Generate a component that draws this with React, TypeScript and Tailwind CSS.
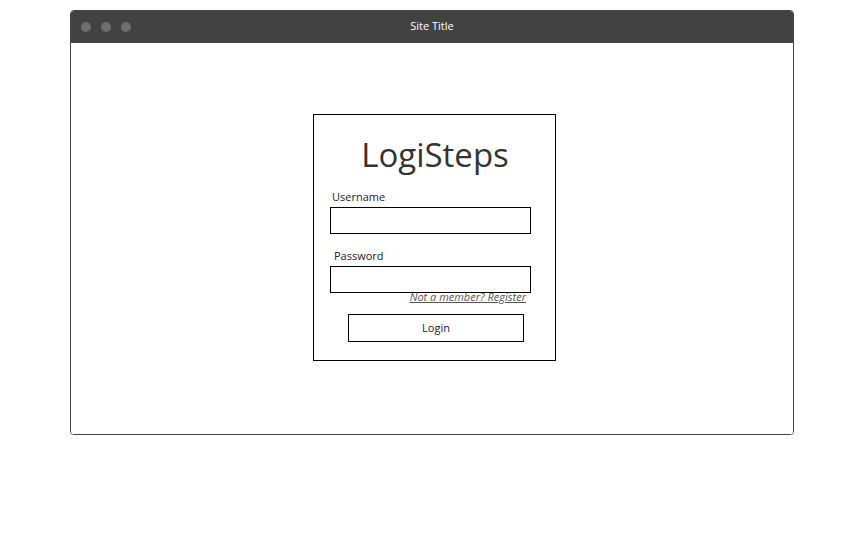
export default function App() {
  return (
    <div className="w-[843px] h-[545px] bg-white pt-[10px] pl-[70px]" style={{ fontFamily: '"Open Sans", "Noto Sans", sans-serif' }}>
      <div className="w-[724px] h-[425px] border border-[#444] rounded-[4px] overflow-hidden flex flex-col">
        <div className="h-[32px] bg-[#424242] flex items-center relative shrink-0">
          <div className="flex gap-[10px] pl-[10px] -mt-[1px]">
            <span className="w-[10px] h-[10px] rounded-full bg-[#6e6e6e]" />
            <span className="w-[10px] h-[10px] rounded-full bg-[#6e6e6e]" />
            <span className="w-[10px] h-[10px] rounded-full bg-[#6e6e6e]" />
          </div>
          <div className="absolute inset-0 flex items-center justify-center text-[11px] text-white pb-[1px]">Site Title</div>
        </div>
        <div className="flex-1 bg-white pt-[71px] pl-[242px]">
          <div className="w-[243px] h-[247px] border border-black flex flex-col">
            <div className="text-[33px] leading-none text-[#333] text-center pt-[23px] pl-[1px]">LogiSteps</div>
            <div className="text-[11px] text-[#222] pl-[18px] pt-[20px] leading-none">Username</div>
            <div className="ml-[16px] mt-[5px] w-[201px] h-[27px] border border-black" />
            <div className="text-[11px] text-[#222] pl-[20px] pt-[16px] leading-none">Password</div>
            <div className="ml-[16px] mt-[5px] w-[201px] h-[27px] border border-black" />
            <div className="w-[212px] -mt-[2px] text-right text-[11px] italic underline text-[#555] leading-none">Not a member? Register</div>
            <div className="ml-[34px] mt-[12px] w-[176px] h-[28px] border border-black flex items-center justify-center text-[11px] text-[#222]">Login</div>
          </div>
        </div>
      </div>
    </div>
  );
}
